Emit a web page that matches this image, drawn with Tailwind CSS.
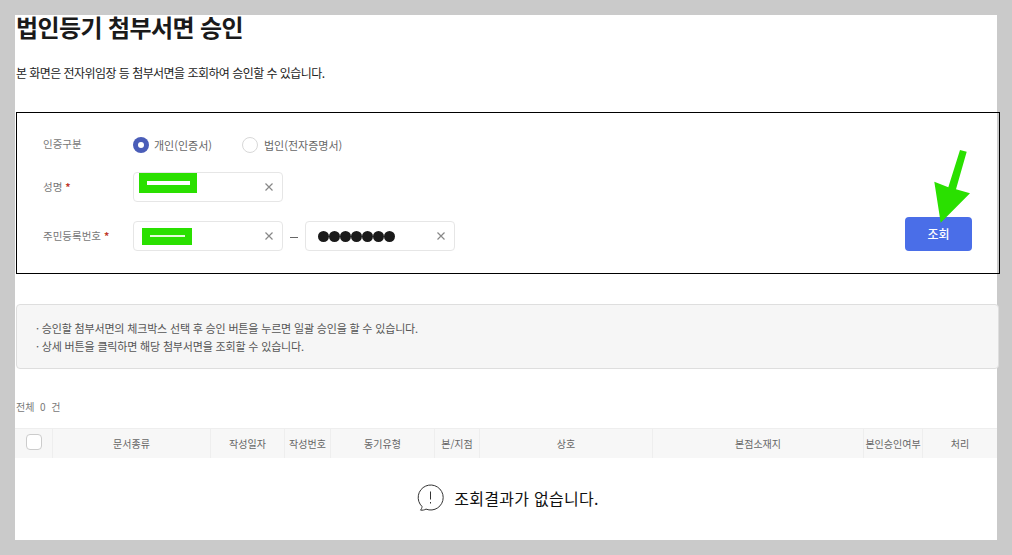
<!DOCTYPE html>
<html lang="ko">
<head>
    <meta charset="UTF-8">
    <meta name="viewport" content="width=device-width, initial-scale=1.0">
    <script src="https://cdn.jsdelivr.net/npm/@tailwindcss/browser@4"></script>
    <title>법인등기 첨부서면 승인</title>
</head>
<body class="bg-[#cacaca] h-[555px] overflow-hidden font-['Noto_Sans_CJK_KR','Noto_Sans',sans-serif]">

    <main class="relative ml-[15px] mt-[15px] w-[982px] h-[525px] bg-white">
        <!-- Title -->
        <h1 class="pl-px text-[24px] leading-[23px] font-bold text-[#1a1a1a] tracking-[-0.6px]">법인등기 첨부서면 승인</h1>
        <p class="pl-px mt-[26px] text-[12px] leading-[18px] text-[#222] tracking-[-0.55px]">본 화면은 전자위임장 등 첨부서면을 조회하여 승인할 수 있습니다.</p>

        <!-- Search form -->
        <section class="ml-px mt-[30px] w-[984px] h-[162px] border border-black flex justify-between items-end pl-[26px] pr-[27px] pb-[22px]">
            <div class="flex flex-col gap-[19px]">
                <div class="flex items-center h-[16px]">
                    <span class="w-[90px] pb-[2px] text-[10.5px] text-[#777]">인증구분</span>
                    <span class="w-[16px] h-[16px] rounded-full bg-[#4a5db8] flex items-center justify-center">
                        <span class="w-[6px] h-[6px] rounded-full bg-white"></span>
                    </span>
                    <span class="ml-[5px] w-[88px] text-[11px] text-[#666]">개인(인증서)</span>
                    <span class="w-[16px] h-[16px] rounded-full border border-[#d8d8d8] bg-white"></span>
                    <span class="ml-[6px] text-[11px] text-[#666]">법인(전자증명서)</span>
                </div>
                <div class="flex items-center h-[30px]">
                    <span class="w-[90px] text-[10.5px] text-[#777]">성명 <b class="text-[#c0392b]">*</b></span>
                    <div class="w-[150px] h-[30px] border border-[#e6e6e6] rounded-[4px] flex items-start justify-between pl-[5px] pr-[9px]">
                        <div class="w-[58px] h-[20px] bg-[#2ae000] flex items-center justify-center">
                            <span class="w-[43px] h-[4px] bg-white"></span>
                        </div>
                        <svg class="mt-[10px]" width="8" height="8" viewBox="0 0 8 8" fill="none" stroke="#888" stroke-width="1.2"><path d="M.5.5l7 7M7.5.5l-7 7"/></svg>
                    </div>
                </div>
                <div class="flex items-center h-[30px]">
                    <span class="w-[90px] text-[10.5px] text-[#777]">주민등록번호 <b class="text-[#c0392b]">*</b></span>
                    <div class="w-[150px] h-[30px] border border-[#e6e6e6] rounded-[4px] flex items-center justify-between pl-[8px] pr-[9px]">
                        <div class="w-[50px] h-[17px] bg-[#2ae000] flex items-center justify-center">
                            <span class="w-[35px] h-[2px] bg-[#e4fbdc]"></span>
                        </div>
                        <svg width="8" height="8" viewBox="0 0 8 8" fill="none" stroke="#888" stroke-width="1.2"><path d="M.5.5l7 7M7.5.5l-7 7"/></svg>
                    </div>
                    <span class="w-[22px] flex justify-center pt-[3px]"><span class="w-[8px] h-px bg-[#666]"></span></span>
                    <div class="w-[150px] h-[30px] border border-[#e6e6e6] rounded-[4px] flex items-center justify-between pl-[12px] pr-[9px]">
                        <div class="flex">
                            <span class="w-[11px] h-[11px] rounded-full bg-[#1a1a1a]"></span>
                            <span class="w-[11px] h-[11px] rounded-full bg-[#1a1a1a]"></span>
                            <span class="w-[11px] h-[11px] rounded-full bg-[#1a1a1a]"></span>
                            <span class="w-[11px] h-[11px] rounded-full bg-[#1a1a1a]"></span>
                            <span class="w-[11px] h-[11px] rounded-full bg-[#1a1a1a]"></span>
                            <span class="w-[11px] h-[11px] rounded-full bg-[#1a1a1a]"></span>
                            <span class="w-[11px] h-[11px] rounded-full bg-[#1a1a1a]"></span>
                        </div>
                        <svg width="8" height="8" viewBox="0 0 8 8" fill="none" stroke="#888" stroke-width="1.2"><path d="M.5.5l7 7M7.5.5l-7 7"/></svg>
                    </div>
                </div>
            </div>
            <button class="w-[67px] h-[34px] rounded-[4px] bg-[#4a6ee8] text-white text-[12px] font-medium">조회</button>
        </section>

        <!-- Green arrow annotation over the button -->
        <svg class="absolute left-[915px] top-[130px]" width="60" height="80" viewBox="0 0 60 80">
            <path d="M30 5L36.7 6.7 26 44.3 40 48.3 10.7 77.7 4.3 36.7 18.3 42.3z" fill="#2ae000"/>
        </svg>

        <!-- Notice -->
        <section class="ml-px mt-[30px] w-[983px] h-[65px] bg-[#f6f6f6] border border-[#dedede] rounded-[4px] pl-[19px] py-[14px] text-[11px] leading-[18px] text-[#555] tracking-[-0.17px]">
            <p>· 승인할 첨부서면의 체크박스 선택 후 승인 버튼을 누르면 일괄 승인을 할 수 있습니다.</p>
            <p>· 상세 버튼을 클릭하면 해당 첨부서면을 조회할 수 있습니다.</p>
        </section>

        <p class="pl-px mt-[30px] text-[10px] leading-[16px] text-[#777]">전체&nbsp; 0&nbsp; 건</p>

        <!-- Table header -->
        <div class="mt-[13px] h-[30px] bg-[#f7f7f7] border-t border-[#eee] grid grid-cols-[38px_158px_74px_46px_104px_45px_173px_211px_59px_74px] text-[10px] text-[#666] text-center">
            <div class="border-r border-[#eee] flex justify-center pt-[5px]">
                <span class="w-[16px] h-[16px] bg-white border border-[#ccc] rounded-[4px]"></span>
            </div>
            <div class="border-r border-[#eee] leading-[29px]">문서종류</div>
            <div class="border-r border-[#eee] leading-[29px]">작성일자</div>
            <div class="border-r border-[#eee] leading-[29px]">작성번호</div>
            <div class="border-r border-[#eee] leading-[29px]">동기유형</div>
            <div class="border-r border-[#eee] leading-[29px]">본/지점</div>
            <div class="border-r border-[#eee] leading-[29px]">상호</div>
            <div class="border-r border-[#eee] leading-[29px]">본점소재지</div>
            <div class="border-r border-[#eee] leading-[29px]">본인승인여부</div>
            <div class="leading-[29px]">처리</div>
        </div>

        <!-- Empty state -->
        <div class="mt-[26px] pl-[4px] flex items-center justify-center gap-[10px]">
            <svg width="27" height="28" viewBox="0 0 27 28" fill="none" stroke="#333" stroke-width="1">
                <path d="M5 22.5a12.5 12.5 0 1 1 4 2.6c-1.5.9-3.5 1.3-5.5 1 .9-1 1.5-2.2 1.5-3.6z"/>
                <path d="M13.5 7.5v8M13.5 18v1.5"/>
            </svg>
            <span class="text-[16px] leading-[24px] text-[#111] tracking-[0.3px]">조회결과가 없습니다.</span>
        </div>
    </main>

</body>
</html>
